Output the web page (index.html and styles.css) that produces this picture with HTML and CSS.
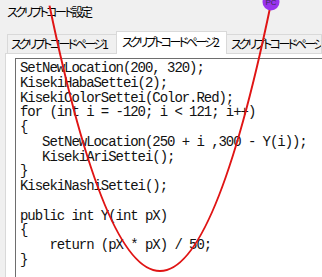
FILE: index.html
```html
<!DOCTYPE html>
<html lang="ja">
<head>
<meta charset="utf-8">
<title>スクリプトコード設定</title>
<link rel="stylesheet" href="styles.css">
</head>
<body>
<div class="window">
  <div class="title">スクリプトコード設定</div>
  <div class="tabs">
    <div class="tab tab1">スクリプトコードページ1</div>
    <div class="tab tab2 active">スクリプトコードページ2</div>
    <div class="tab tab3">スクリプトコードページ3</div>
  </div>
  <div class="panel">
    <pre class="code">SetNewLocation(200, 320);
KisekiHabaSettei(2);
KisekiColorSettei(Color.Red);
for (int i = -120; i &lt; 121; i++)
{
   SetNewLocation(250 + i ,300 - Y(i));
   KisekiAriSettei();
}
KisekiNashiSettei();

public int Y(int pX)
{
    return (pX * pX) / 50;
}</pre>
  </div>
</div>
<svg class="overlay" width="322" height="277" viewBox="0 0 322 277">
  <path d="M49.5 5.6 Q160 536.4 270.5 5.6" fill="none" stroke="#e01414" stroke-width="2"/>
  <circle cx="271" cy="2" r="8.5" fill="#9933ee"/>
  <text x="271" y="5" text-anchor="middle" class="pc">PC</text>
</svg>
</body>
</html>
```

FILE: styles.css
```css
html, body {
  margin: 0;
  padding: 0;
}
body {
  width: 322px;
  height: 277px;
  overflow: hidden;
  background: #f0f0f0;
  position: relative;
  font-family: "Noto Sans CJK JP", "Noto Sans", sans-serif;
  color: #000;
}
.window {
  display: flex;
  flex-direction: column;
  height: 277px;
}
.title {
  height: 31px;
  box-sizing: border-box;
  padding: 4px 0 0 7px;
  font-size: 12px;
  line-height: 16px;
  letter-spacing: -2.5px;
  font-feature-settings: "palt";
}
.tabs {
  display: flex;
  align-items: flex-end;
  height: 22px;
  padding-left: 7px;
  position: relative;
  z-index: 1;
}
.tab {
  box-sizing: border-box;
  height: 19px;
  border: 1px solid #d9d9d9;
  border-bottom: none;
  background: #f0f0f0;
  font-size: 12px;
  line-height: 17px;
  letter-spacing: -2.6px;
  white-space: nowrap;
  overflow: hidden;
  font-feature-settings: "palt";
}
.tab1 {
  width: 109px;
  padding-left: 3px;
  border-right: none;
}
.tab2 {
  width: 111px;
  padding-left: 5px;
}
.tab3 {
  flex: 1;
  padding-left: 4px;
  border-left: none;
}
.tab.active {
  height: 23px;
  margin-bottom: -1px;
  background: #fff;
  line-height: 19px;
}
.panel {
  flex: 1;
  margin-left: 5px;
  background: #fff;
  border-left: 1px solid #d9d9d9;
  border-top: 1px solid #d9d9d9;
  padding: 4px 0 0 9px;
  overflow: hidden;
}
.code {
  margin: 0;
  height: 260px;
  box-sizing: border-box;
  border-left: 1px solid #6e6e6e;
  border-top: 1px solid #6e6e6e;
  background: #fff;
  padding: 2px 0 0 4px;
  font-family: "Liberation Mono", monospace;
  font-size: 14px;
  letter-spacing: -1.05px;
  line-height: 14.75px;
  color: #111;
  white-space: pre;
}
.overlay {
  position: absolute;
  top: 0;
  left: 0;
  z-index: 5;
}
.pc {
  font-family: "Liberation Sans", sans-serif;
  font-size: 8px;
  fill: #3a2a55;
}
```
